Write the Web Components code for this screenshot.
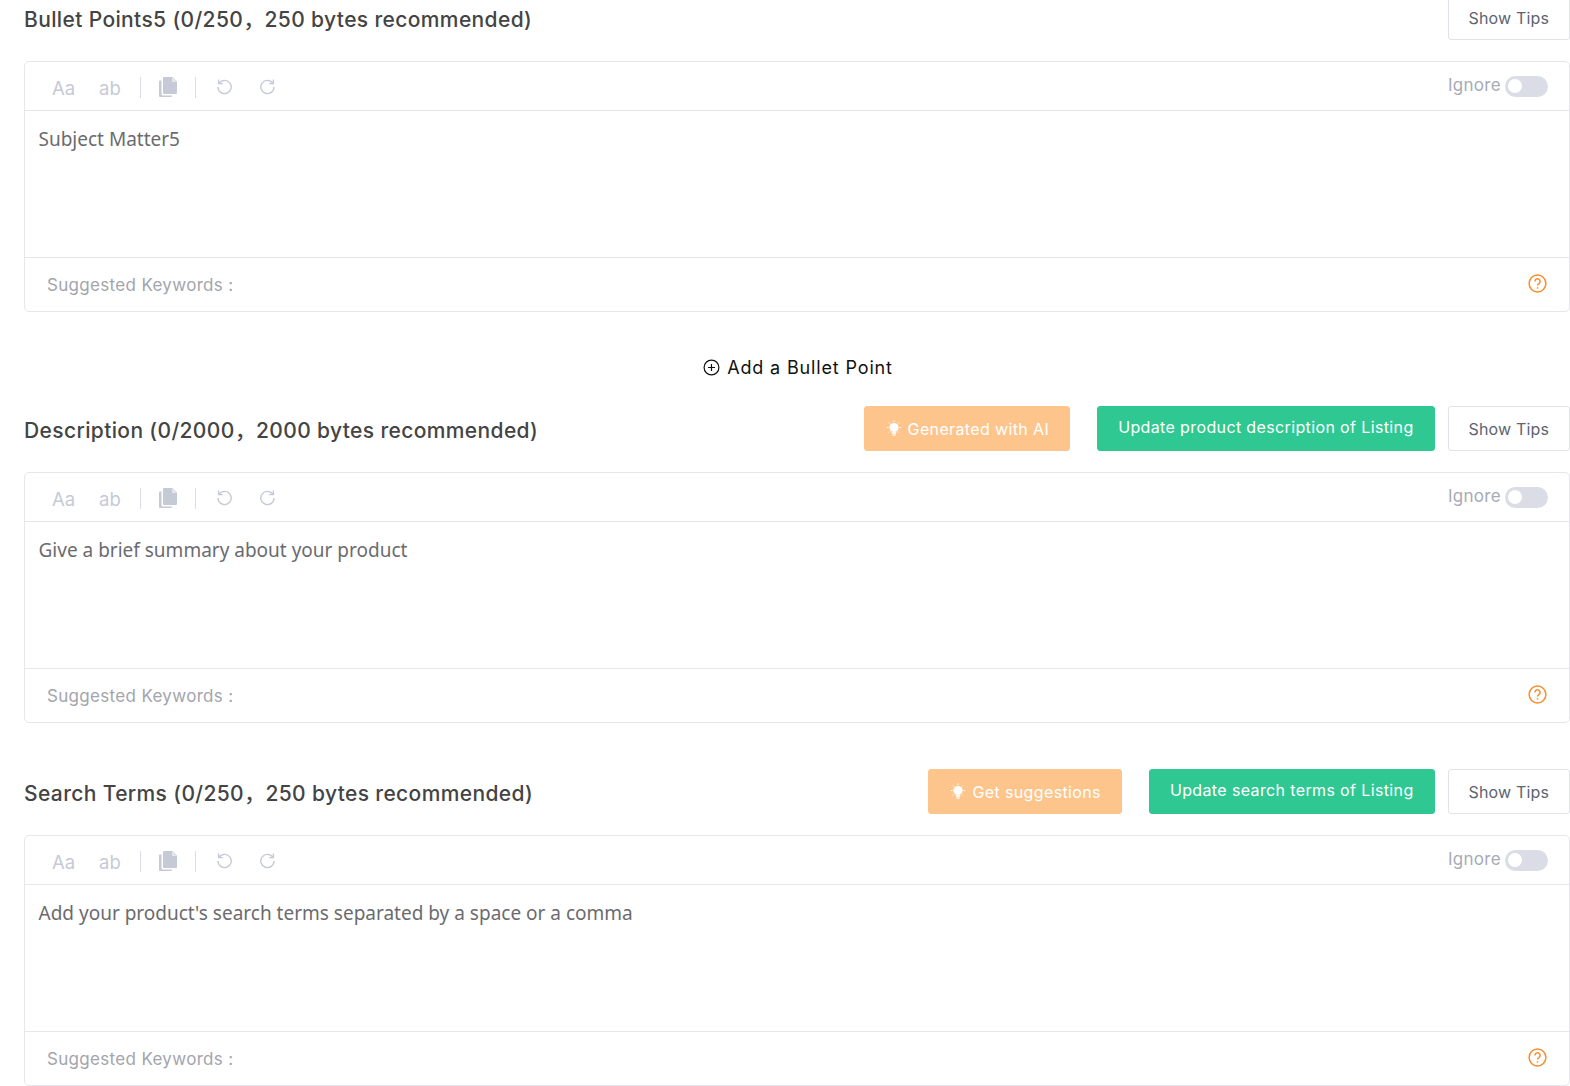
<!DOCTYPE html>
<html lang="en"><head><meta charset="utf-8"><title>Listing editor</title>
<style>
html,body{margin:0;padding:0;background:#fff;overflow:hidden;height:1086px}
body{font-family:"Open Sans","Noto Sans",sans-serif}
</style></head><body>
<listing-page>
<listing-section title-text="Bullet Points5 (0/250， 250 bytes recommended)" placeholder="Subject Matter5"></listing-section>
<add-link>Add a Bullet Point</add-link>
<listing-section title-text="Description (0/2000， 2000 bytes recommended)" placeholder="Give a brief summary about your product" ai="Generated with AI" update="Update product description of Listing"></listing-section>
<listing-section class="s3" title-text="Search Terms (0/250， 250 bytes recommended)" placeholder="Add your product's search terms separated by a space or a comma" ai="Get suggestions" update="Update search terms of Listing"></listing-section>
</listing-page>
<script>
const HEAD='"Inter","Noto Sans CJK SC","Noto Sans",sans-serif', BODY='"Noto Sans","Open Sans",sans-serif';
class ListingPage extends HTMLElement{constructor(){super();this.attachShadow({mode:'open'}).innerHTML=`<style>
:host{display:flex;flex-direction:column;margin:-5px 0 0 24px}
::slotted(listing-section.s3){margin-top:46px}
</style><slot></slot>`}}
class AddLink extends HTMLElement{constructor(){super();this.attachShadow({mode:'open'}).innerHTML=`<style>
:host{display:flex;align-items:center;justify-content:center;gap:7px;height:94px;box-sizing:border-box;font:400 18px/24px ${HEAD};letter-spacing:.85px;color:#111;padding:17px 0 0 2px}
svg{display:block}
</style><svg width="17" height="17" viewBox="0 0 17 17" fill="none" stroke="#111" stroke-width="1.2"><circle cx="8.5" cy="8.5" r="7.4"/><path d="M8.5 5v7M5 8.5h7"/></svg><slot></slot>`}}
class UiButton extends HTMLElement{constructor(){super();this.attachShadow({mode:'open'}).innerHTML=`<style>
:host{display:inline-flex;align-items:center;justify-content:center;box-sizing:border-box;height:45px;padding:0 20px;border-radius:3px;font:400 16px/20px ${HEAD};letter-spacing:.15px;white-space:nowrap;border:1px solid #e2e2ea;color:#5c6470;background:#fff}
:host([kind=green]){background:#2fc892;border-color:#2fc892;color:#fff;padding-bottom:3px;letter-spacing:.37px}
:host([kind=orange]){background:#fdc58c;border-color:#fdc58c;color:#fff;gap:6px;padding:1px 20px 0 21px;letter-spacing:.37px}
svg{display:block}
</style><slot></slot>`}}
class ToggleSwitch extends HTMLElement{constructor(){super();this.attachShadow({mode:'open'}).innerHTML=`<style>
:host{display:block;width:43px;height:21px;border-radius:11px;background:#dadde5;position:relative}
i{position:absolute;left:3px;top:3.5px;width:14px;height:14px;border-radius:50%;background:#fff}
</style><i></i>`}}
const BULB=`<svg width="16" height="18" viewBox="0 0 16 18" fill="#fff" stroke="none" aria-hidden="true"><circle cx="8" cy="7.5" r="4.6"/><rect x="5.8" y="12.2" width="4.4" height="1.6"/><rect x="6.4" y="14.4" width="3.2" height="1.3"/><g stroke="#fff" stroke-width="1"><path d="M8 .4v1.6M.8 7.5h1.6M13.6 7.5h1.6M2.8 2.4l1.1 1.1M13.2 2.4l-1.1 1.1M2.8 12.6l1.1-1.1M13.2 12.6l-1.1-1.1"/></g></svg>`;
class ListingEditor extends HTMLElement{constructor(){super();this.attachShadow({mode:'open'})}
connectedCallback(){const ph=this.getAttribute('placeholder');
this.shadowRoot.innerHTML=`<style>
:host{display:flex;height:251px;box-sizing:border-box;border:1px solid #e6e6ec;border-radius:5px;flex-direction:column;font-family:${BODY}}
.tb{height:49px;box-sizing:border-box;border-bottom:1px solid #e6e6ec;display:flex;align-items:center;padding:2px 21px 0 27px;flex:none}
.tx{font:400 18.5px/24px ${HEAD};color:#c6cad6;width:47px;margin-top:1px}
.tx.b{width:41px}
.sep{width:1px;height:21px;background:#dcdfe6}
.doc{margin:0 18px 0 18px;display:block}
.u{display:block;margin:-2px 0 0 20px}
.u.r{margin-left:26px}
.ign{margin-left:auto;display:flex;align-items:center;gap:4px;font:400 17px/22px ${HEAD};letter-spacing:.3px;color:#a7abb5;margin-top:-2px}
.ign span{margin-bottom:3px}
.bd{flex:1;padding:15px 14px 15px 13.5px;font-size:19px;line-height:26px;color:#6b6b6f}
.ft{height:54px;flex:none;box-sizing:border-box;border-top:1px solid #e6e6ec;display:flex;align-items:center;justify-content:space-between;padding:0 22px 0 22px;font:400 17px/22px ${HEAD};letter-spacing:.32px;color:#a3a5ad}
.ft svg{margin-bottom:2px}
</style>
<div class="tb"><span class="tx">Aa</span><span class="tx b">ab</span><span class="sep"></span>
<svg class="doc" width="18" height="20" viewBox="0 0 18 20" fill="#c6cad6"><path d="M5 0h8.5L18 4.5V16a1 1 0 0 1-1 1H5a1 1 0 0 1-1-1V1a1 1 0 0 1 1-1z"/><path d="M0 4.5a1 1 0 0 1 1-1h1.5V17a1.5 1.5 0 0 0 1.5 1.5h9V19a1 1 0 0 1-1 1H1a1 1 0 0 1-1-1z"/><path d="M13 0v5h5" fill="#e4e6ec"/></svg>
<span class="sep"></span>
<svg class="u" width="17" height="17" viewBox="0 0 17 17" fill="none" stroke="#c6cad6" stroke-width="1.4"><path d="M3.2 5.2A6.6 6.6 0 1 1 2 9"/><path d="M2.6 1.4v4.2h4.2"/></svg>
<svg class="u r" width="17" height="17" viewBox="0 0 17 17" fill="none" stroke="#c6cad6" stroke-width="1.4"><path d="M13.8 5.2A6.6 6.6 0 1 0 15 9"/><path d="M14.4 1.4v4.2h-4.2"/></svg>
<div class="ign"><span>Ignore</span><toggle-switch></toggle-switch></div></div>
<div class="bd">${ph}</div>
<div class="ft"><span>Suggested Keywords :</span>
<svg width="19" height="19" viewBox="0 0 19 19" fill="none" stroke="#f98d2c" stroke-width="1.5"><circle cx="9.5" cy="9.5" r="8.4"/><path d="M6.9 7.4a2.6 2.6 0 1 1 4 2.2c-.9.6-1.4 1-1.4 2"/><path d="M9.5 13.2v1.4"/></svg></div>`}}
class ListingSection extends HTMLElement{constructor(){super();this.attachShadow({mode:'open'})}
connectedCallback(){const ai=this.getAttribute('ai'),up=this.getAttribute('update');
const title=this.getAttribute('title-text').replace('， ','<span class="c">， </span>');
this.shadowRoot.innerHTML=`<style>
:host{display:block}
.hd{display:flex;align-items:center;height:45px;margin-bottom:21px}
h2{margin:5px auto 0 0;font:500 21px/28px ${HEAD};color:#444;letter-spacing:.37px;white-space:nowrap}
.c{word-spacing:-6px}
.g{margin-left:27px}
.t{margin-left:13px}
</style><div class="hd"><h2>${title}</h2>
${ai?`<ui-button kind="orange">${BULB}<span>${ai}</span></ui-button><ui-button class="g" kind="green">${up}</ui-button>`:''}
<ui-button class="t">Show Tips</ui-button></div>
<listing-editor placeholder="${this.getAttribute('placeholder')}"></listing-editor>`}}
customElements.define('ui-button',UiButton);
customElements.define('toggle-switch',ToggleSwitch);
customElements.define('listing-editor',ListingEditor);
customElements.define('listing-section',ListingSection);
customElements.define('add-link',AddLink);
customElements.define('listing-page',ListingPage);
</script></body></html>
